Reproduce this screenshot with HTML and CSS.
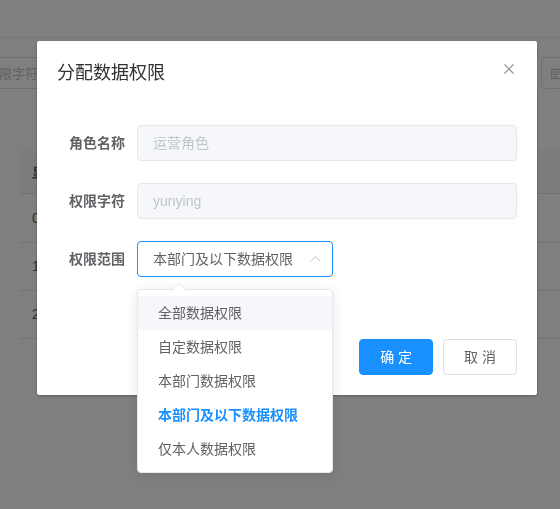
FILE: index.html
```html
<!DOCTYPE html>
<html lang="zh-CN">
<head>
<meta charset="utf-8">
<title>分配数据权限</title>
<link rel="stylesheet" href="styles.css">
</head>
<body>
<div class="page">
  <div class="topbar"></div>
  <div class="content">
    <div class="search">
      <div class="bg-input name"><span class="ph">请输入权限字符</span></div>
      <div class="bg-input date">
        <svg class="cal" width="10" height="11" viewBox="0 0 10 11">
          <rect x="0.5" y="1.5" width="9" height="9" fill="none" stroke="#c0c4cc" stroke-width="1"/>
          <line x1="0.5" y1="4" x2="9.5" y2="4" stroke="#c0c4cc" stroke-width="1"/>
          <line x1="3" y1="0" x2="3" y2="2.5" stroke="#c0c4cc" stroke-width="1"/>
          <line x1="7" y1="0" x2="7" y2="2.5" stroke="#c0c4cc" stroke-width="1"/>
          <rect x="2" y="5.5" width="1.5" height="1.5" fill="#c0c4cc"/>
          <rect x="4.3" y="5.5" width="1.5" height="1.5" fill="#c0c4cc"/>
          <rect x="6.6" y="5.5" width="1.5" height="1.5" fill="#c0c4cc"/>
          <rect x="2" y="8" width="1.5" height="1.5" fill="#c0c4cc"/>
          <rect x="4.3" y="8" width="1.5" height="1.5" fill="#c0c4cc"/>
        </svg>
      </div>
    </div>
    <table class="bg-table">
      <thead><tr><th>显示顺序</th></tr></thead>
      <tbody>
        <tr class="r1"><td>0</td></tr>
        <tr><td>1</td></tr>
        <tr><td>2</td></tr>
      </tbody>
    </table>
  </div>
</div>

<div class="mask"></div>

<div class="dialog-wrap">
  <div class="dialog">
    <div class="dialog-header">
      <div class="dialog-title">分配数据权限</div>
      <button class="close" type="button" aria-label="关闭">
        <svg width="10" height="10" viewBox="0 0 10 10"><path d="M0.5 0.5L9.5 9.5M9.5 0.5L0.5 9.5" stroke="#909399" stroke-width="1.2" fill="none"/></svg>
      </button>
    </div>
    <div class="dialog-body">
      <div class="form-item">
        <label class="form-label">角色名称</label>
        <div class="form-content"><div class="input disabled">运营角色</div></div>
      </div>
      <div class="form-item">
        <label class="form-label">权限字符</label>
        <div class="form-content"><div class="input disabled">yunying</div></div>
      </div>
      <div class="form-item">
        <label class="form-label">权限范围</label>
        <div class="form-content">
          <div class="select-wrap">
            <div class="select">
              <span class="select-text">本部门及以下数据权限</span>
              <svg class="chev" width="11" height="6" viewBox="0 0 11 6"><polyline points="0.5,5.5 5.5,0.5 10.5,5.5" fill="none" stroke="#c0c4cc" stroke-width="1"/></svg>
            </div>
            <div class="dropdown">
              <span class="arrow"></span>
              <ul class="options">
                <li class="opt hover">全部数据权限</li>
                <li class="opt">自定数据权限</li>
                <li class="opt">本部门数据权限</li>
                <li class="opt selected">本部门及以下数据权限</li>
                <li class="opt">仅本人数据权限</li>
              </ul>
            </div>
          </div>
        </div>
      </div>
    </div>
    <div class="dialog-footer">
      <button class="btn primary" type="button">确 定</button>
      <button class="btn" type="button">取 消</button>
    </div>
  </div>
</div>
</body>
</html>
```

FILE: styles.css
```css
* { box-sizing: border-box; }

html, body {
  margin: 0;
  padding: 0;
  width: 560px;
  height: 509px;
  overflow: hidden;
  background: #fff;
  font-family: "Liberation Sans", "Noto Sans CJK SC", sans-serif;
}

/* ---------- background page ---------- */
.page {
  width: 560px;
  height: 509px;
  overflow: hidden;
}

.topbar {
  height: 38px;
  border-bottom: 1px solid #eaecef;
}

.content {
  padding-top: 19px;
}

.search {
  display: flex;
  gap: 370px;
  height: 32px;
  white-space: nowrap;
}

.bg-input {
  flex: none;
  height: 32px;
  border: 1px solid #dcdfe6;
  border-radius: 4px;
  background: #fff;
  display: flex;
  align-items: center;
}

.bg-input.name {
  margin-left: -69px;
  width: 240px;
  padding-left: 15px;
}

.ph {
  font-size: 13px;
  color: #c0c4cc;
  line-height: 1;
}

.bg-input.date {
  width: 240px;
  padding-left: 9px;
}

.cal { display: block; }

.bg-table {
  margin-top: 61px;
  margin-left: 20px;
  width: 700px;
  border-collapse: collapse;
  font-size: 14px;
}

.bg-table th {
  height: 43px;
  background: #f8f8f9;
  color: #515a6e;
  font-weight: bold;
  font-size: 13px;
  text-align: left;
  padding: 0 12px;
  border-bottom: 1px solid #dfe6ec;
}

.bg-table td {
  height: 48px;
  padding: 0 12px;
  color: #606266;
  border-bottom: 1px solid #dfe6ec;
}

.bg-table tr.r1 td { height: 49px; }

/* ---------- mask ---------- */
.mask {
  position: fixed;
  inset: 0;
  background: rgba(0, 0, 0, 0.5);
}

.dialog-wrap {
  position: fixed;
  inset: 0;
}

.dialog {
  position: relative;
  width: 500px;
  margin: 41px 0 0 37px;
  background: #fff;
  border-radius: 2px;
  box-shadow: 0 1px 3px rgba(0, 0, 0, 0.3);
}

.dialog-header {
  padding: 20px 20px 10px;
}

.dialog-title {
  height: 24px;
  font-size: 18px;
  color: #303133;
  line-height: 24px;
}

.close {
  position: absolute;
  top: 20px;
  right: 20px;
  width: 16px;
  height: 16px;
  padding: 0;
  border: 0;
  background: transparent;
  display: flex;
  align-items: center;
  justify-content: center;
}

.close svg { display: block; }

.dialog-body {
  padding: 30px 20px;
}

.form-item {
  display: flex;
  margin-bottom: 22px;
}

.form-label {
  flex: none;
  width: 80px;
  padding-right: 12px;
  text-align: right;
  font-size: 14px;
  font-weight: bold;
  color: #606266;
  line-height: 36px;
  height: 36px;
}

.form-content {
  flex: 1;
  min-width: 0;
}

.input {
  height: 36px;
  line-height: 34px;
  padding: 0 15px;
  border: 1px solid #dcdfe6;
  border-radius: 4px;
  font-size: 14px;
  color: #606266;
}

.input.disabled {
  background: #f5f7fa;
  border-color: #e4e7ed;
  color: #c0c4cc;
}

.select-wrap {
  position: relative;
  width: 196px;
}

.select {
  height: 36px;
  padding: 0 11px 0 15px;
  border: 1px solid #1890ff;
  border-radius: 4px;
  display: flex;
  align-items: center;
  justify-content: space-between;
  font-size: 14px;
  color: #606266;
}

.select-text { line-height: 1; }

.chev { display: block; margin-top: -1px; }

.dropdown {
  position: absolute;
  top: calc(100% + 12px);
  left: 0;
  width: 196px;
  background: #fff;
  border: 1px solid #e4e7ed;
  border-radius: 4px;
  box-shadow: 0 2px 12px rgba(0, 0, 0, 0.1);
  z-index: 10;
}

.arrow {
  position: absolute;
  top: -7px;
  left: 35px;
  width: 0;
  height: 0;
  border-left: 6px solid transparent;
  border-right: 6px solid transparent;
  border-bottom: 6px solid #e4e7ed;
}

.arrow::after {
  content: "";
  position: absolute;
  top: 1px;
  left: -6px;
  border-left: 6px solid transparent;
  border-right: 6px solid transparent;
  border-bottom: 6px solid #fff;
}

.options {
  list-style: none;
  margin: 0;
  padding: 6px 0;
}

.opt {
  height: 34px;
  line-height: 34px;
  padding: 0 20px;
  font-size: 14px;
  color: #606266;
  white-space: nowrap;
}

.opt.hover { background: #f5f7fa; }

.opt.selected {
  color: #1890ff;
  font-weight: bold;
}

.dialog-footer {
  padding: 10px 20px 20px;
  display: flex;
  justify-content: flex-end;
  gap: 10px;
}

.btn {
  display: block;
  height: 36px;
  padding: 0 20px;
  margin: 0;
  border: 1px solid #dcdfe6;
  border-radius: 4px;
  background: #fff;
  color: #606266;
  font-family: inherit;
  font-size: 14px;
  line-height: 34px;
}

.btn.primary {
  background: #1890ff;
  border-color: #1890ff;
  color: #fff;
}
```
